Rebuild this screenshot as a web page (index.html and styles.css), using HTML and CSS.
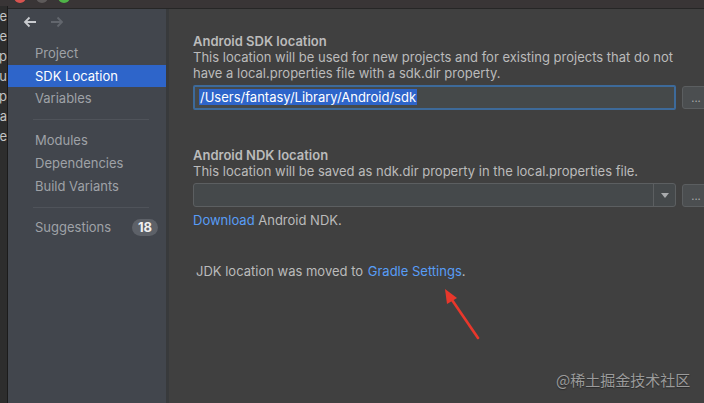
FILE: index.html
```html
<!DOCTYPE html>
<html lang="en">
<head>
  <meta charset="UTF-8">
  <meta name="viewport" content="width=device-width, initial-scale=1.0">
  <title>Project Structure</title>
  <link rel="stylesheet" href="styles.css">
</head>
<body>
  <div class="titlebar">
    <span class="light red"></span>
    <span class="light gray"></span>
    <span class="light green"></span>
  </div>

  <div class="window">
    <div class="behind">
      <span>le</span><span>le</span><span>ap</span><span>ru</span><span>p</span><span>ra</span><span>e</span>
    </div>

    <nav class="sidebar">
      <div class="nav-arrows">
        <svg width="14" height="12" viewBox="0 0 14 12"><path d="M13 6H2M6.5 1.5L2 6l4.5 4.5" fill="none" stroke="#c9cbcf" stroke-width="1.8"/></svg>
        <svg width="14" height="12" viewBox="0 0 14 12"><path d="M1 6h11M7.5 1.5L12 6l-4.5 4.5" fill="none" stroke="#62666d" stroke-width="1.8"/></svg>
      </div>
      <ul class="menu">
        <li>Project</li>
        <li class="active">SDK Location</li>
        <li>Variables</li>
      </ul>
      <hr class="menu-sep">
      <ul class="menu">
        <li>Modules</li>
        <li>Dependencies</li>
        <li>Build Variants</li>
      </ul>
      <hr class="menu-sep tight">
      <ul class="menu">
        <li class="with-badge">Suggestions <span class="badge">18</span></li>
      </ul>
    </nav>

    <main class="content">
      <section class="field sdk">
        <h3>Android SDK location</h3>
        <p>This location will be used for new projects and for existing projects that do not have a local.properties file with a sdk.dir property.</p>
        <div class="field-row">
          <div class="text-input focused"><span class="selected-text">/Users/fantasy/Library/Android/sdk</span></div>
          <button class="browse-btn">...</button>
        </div>
      </section>

      <section class="field ndk">
        <h3>Android NDK location</h3>
        <p>This location will be saved as ndk.dir property in the local.properties file.</p>
        <div class="field-row">
          <div class="combo">
            <div class="combo-value"></div>
            <div class="combo-arrow"><span class="tri"></span></div>
          </div>
          <button class="browse-btn">...</button>
        </div>
        <p class="download"><a href="#">Download</a> Android NDK.</p>
      </section>

      <p class="jdk-note">JDK location was moved to <a href="#">Gradle Settings</a>.</p>
    </main>
  </div>

  <svg class="red-arrow" width="60" height="70" viewBox="0 0 60 70">
    <line x1="46" y1="61" x2="18" y2="20" stroke="#e8372b" stroke-width="2.6" stroke-linecap="round"/>
    <polygon points="13,12 25,21 15,27" fill="#e8372b"/>
  </svg>

  <div class="watermark">@稀土掘金技术社区</div>
</body>
</html>
```

FILE: styles.css
```css
/* Reset */
* {
  box-sizing: border-box;
  margin: 0;
  padding: 0;
}

body {
  width: 704px;
  height: 403px;
  overflow: hidden;
  background-color: #404040;
  font-family: Inter, "Liberation Sans", Arial, sans-serif;
  font-size: 13px;
  color: #bbbbbb;
  position: relative;
}

a {
  color: #589df6;
  text-decoration: none;
}

/* Title bar (mostly cut off) */
.titlebar {
  height: 9px;
  background-color: #393536;
  border-bottom: 1px solid #262626;
  display: flex;
  gap: 10px;
  padding-left: 14px;
  overflow: hidden;
}

.light {
  width: 12px;
  height: 12px;
  border-radius: 50%;
  margin-top: -9px;
}

.light.red { background-color: #d9534f; }
.light.gray { background-color: #5d5a5a; }
.light.green { background-color: #4fb348; }

/* Window body */
.window {
  display: flex;
  height: 394px;
}

.behind {
  width: 8px;
  background-color: #2d2d2d;
  border-right: 1px solid #1b1b1b;
  display: flex;
  flex-direction: column;
  align-items: flex-end;
  overflow: hidden;
  margin-top: -3px;
  color: #c4c4c4;
  line-height: 20px;
}

.behind span {
  white-space: nowrap;
}

/* Sidebar */
.sidebar {
  width: 161px;
  background-color: #42464d;
  border-right: 3px solid #383a3c;
  flex-shrink: 0;
}

.nav-arrows {
  display: flex;
  gap: 13px;
  padding: 7px 0 0 15px;
  height: 33px;
}

.menu {
  list-style: none;
}

.menu li {
  height: 23px;
  line-height: 23px;
  padding-left: 27px;
  color: #9fa2a7;
}

.menu li.active {
  background-color: #2e65ca;
  color: #ffffff;
  height: 22px;
  line-height: 22px;
}

.menu-sep {
  border: none;
  border-top: 1px solid #4f535a;
  margin: 9px 17px 9px 25px;
}

.menu-sep.tight {
  margin: 9px 17px 8px 25px;
}

.with-badge {
  display: flex;
  align-items: center;
  justify-content: space-between;
  padding-right: 8px;
}

.badge {
  background-color: #5d6168;
  color: #f0f0f0;
  font-weight: bold;
  font-size: 13px;
  line-height: 17px;
  padding: 0 6px;
  border-radius: 9px;
}

/* Main content */
.content {
  flex: 1;
  padding: 24px 0 0 24px;
  overflow: hidden;
}

.field h3 {
  font-size: 13px;
  font-weight: 600;
  line-height: 16px;
  color: #bbbbbb;
}

.field p {
  line-height: 16px;
  width: 495px;
}

.field-row {
  display: flex;
  gap: 6px;
  margin-top: 4px;
}

.text-input {
  width: 483px;
  height: 25px;
  background-color: #45494a;
  border: 2px solid #3d6a9a;
  border-radius: 2px;
  padding: 2px 4px;
  line-height: 17px;
  flex-shrink: 0;
}

.selected-text {
  background-color: #2e65ca;
  color: #ffffff;
  padding: 0 1px;
}

.browse-btn {
  width: 28px;
  height: 23px;
  margin-top: 1px;
  background-color: #4b4e50;
  border: 1px solid #5b5e60;
  border-radius: 3px;
  color: #a9a9a9;
  font-family: inherit;
  font-size: 11px;
  flex-shrink: 0;
}

.sdk {
  margin-bottom: 37px;
}

.combo {
  width: 483px;
  height: 24px;
  display: flex;
  background-color: #45494b;
  border: 1px solid #5c5f61;
  border-radius: 3px;
  flex-shrink: 0;
}

.combo-value {
  flex: 1;
}

.combo-arrow {
  width: 22px;
  border-left: 1px solid #5c5f61;
  display: flex;
  align-items: center;
  justify-content: center;
}

.tri {
  border-left: 4px solid transparent;
  border-right: 4px solid transparent;
  border-top: 5px solid #a9abad;
}

.field p.download {
  margin-top: 5px;
}

.jdk-note {
  margin: 35px 0 0 3px;
  line-height: 16px;
}

.jdk-note a {
  margin-left: 1px;
}

/* Overlays */
.red-arrow {
  position: absolute;
  left: 432px;
  top: 277px;
}

.watermark {
  position: absolute;
  left: 556px;
  top: 369px;
  font-family: "Noto Sans CJK SC", sans-serif;
  font-size: 15px;
  color: #9b9b9b;
  text-shadow: 0 1px 1px #2a2a2a;
}
```
